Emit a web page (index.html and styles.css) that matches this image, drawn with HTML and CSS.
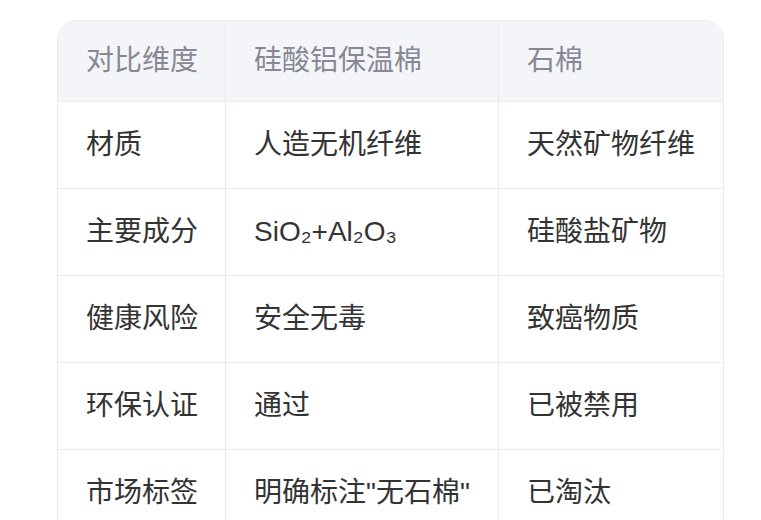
FILE: index.html
```html
<!DOCTYPE html>
<html lang="zh-CN">
<head>
<meta charset="utf-8">
<link rel="stylesheet" href="styles.css">
</head>
<body>
<div class="wrap">
<table class="cmp">
<thead>
<tr><th class="c1">对比维度</th><th class="c2">硅酸铝保温棉</th><th class="c3">石棉</th></tr>
</thead>
<tbody>
<tr><td>材质</td><td>人造无机纤维</td><td>天然矿物纤维</td></tr>
<tr><td>主要成分</td><td>SiO₂+Al₂O₃</td><td>硅酸盐矿物</td></tr>
<tr><td>健康风险</td><td>安全无毒</td><td>致癌物质</td></tr>
<tr><td>环保认证</td><td>通过</td><td>已被禁用</td></tr>
<tr><td>市场标签</td><td>明确标注"无石棉"</td><td>已淘汰</td></tr>
</tbody>
</table>
</div>
</body>
</html>
```

FILE: styles.css
```css
html, body {
  margin: 0;
  padding: 0;
  background: #ffffff;
}
.wrap {
  padding: 20px 0 0 57px;
}
.cmp {
  border-collapse: separate;
  border-spacing: 0;
  width: 667px;
  table-layout: fixed;
  border: 1px solid #ebebef;
  border-radius: 20px;
  overflow: hidden;
  font-family: "Liberation Sans", "Noto Sans CJK SC", sans-serif;
  font-size: 28px;
  line-height: 30px;
}
.cmp th, .cmp td {
  box-sizing: border-box;
  text-align: left;
  padding: 28px 0 28px 28px;
  border-bottom: 1px solid #ebebef;
  border-right: 1px solid #ebebef;
  white-space: nowrap;
  color: #333333;
  font-weight: normal;
}
.cmp th.c1 { width: 168px; }
.cmp th.c2 { width: 273px; }
.cmp th {
  padding-top: 25px;
  padding-bottom: 25px;
  background: #f4f5f9;
  color: #878894;
}
.cmp th:last-child, .cmp td:last-child {
  border-right: none;
}
.cmp tbody tr:last-child td {
  border-bottom: none;
}
```
